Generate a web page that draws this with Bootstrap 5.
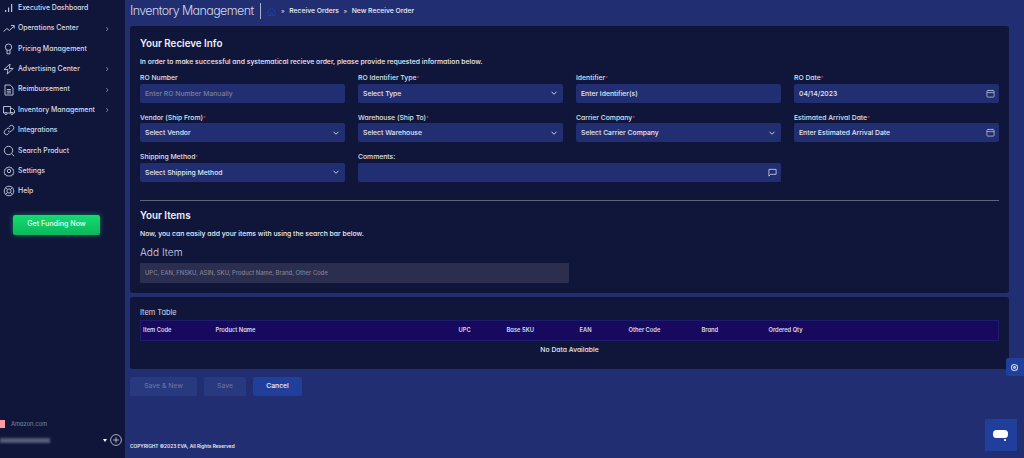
<!DOCTYPE html>
<html lang="en">
<head>
    <meta charset="UTF-8">
    <meta name="viewport" content="width=device-width, initial-scale=1.0">
    <title>Inventory Management</title>
    <link href="https://cdn.jsdelivr.net/npm/bootstrap@5.3.0/dist/css/bootstrap.min.css" rel="stylesheet">
    <style>
        html, body { height: 100%; }
        body {
            overflow: hidden;
            background: #212e71;
            color: #e6e8f2;
            font-family: Inter, "Liberation Sans", sans-serif;
            font-feature-settings: "cv11";
            font-size: 7px;
            font-weight: 500;
            line-height: 1.2;
        }
        .app-shell { height: 458px; }

        /* sidebar */
        .side-bar { width: 125px; flex: none; background: #10163a; position: relative; }
        .side-list { margin-top: -2px; }
        .side-item { position: relative; height: 20.37px; padding-left: 3px; color: #d9dcec; font-size: 6.9px; }
        .side-item svg.ico { width: 12px; height: 12px; margin-right: 3px; flex: none; }
        .side-item .side-arrow { position: absolute; left: 104px; width: 6px; height: 6px; }
        .funding-btn {
            width: 87px; height: 20px; margin: 13px 0 0 13px; padding: 0;
            background: linear-gradient(#12dc70, #0cb75c); border: 0; border-radius: 2px;
            color: #e9fff3; font-size: 7.1px; font-weight: 500;
            box-shadow: 0 0 5px rgba(18, 220, 112, .5);
        }
        .account-row { position: absolute; left: 0; right: 0; bottom: 0; height: 38px; }
        .shop-flag { position: absolute; left: 0; top: 0; width: 5px; height: 8px; background: #ff9a9f; }
        .shop-name { position: absolute; left: 11px; top: 1px; color: #74788f; font-size: 5.7px; }
        .shop-blur { position: absolute; left: 0; top: 18px; width: 50px; height: 5px; background: #565b78; filter: blur(1.2px); }
        .shop-caret { position: absolute; left: 103px; top: 19px; border: 2.5px solid transparent; border-top: 3px solid #fff; border-bottom: 0; }
        .shop-plus { position: absolute; left: 110px; top: 14px; width: 12px; height: 12px; }

        /* header */
        .main-area { min-width: 0; padding: 0 15px 0 5px; }
        .top-bar { height: 26px; padding-bottom: 4px; }
        .page-title { font-size: 12.5px; font-weight: 300; letter-spacing: -.6px; color: #d5d9ea; padding-right: 6px; border-right: 1px solid #aab0cc; line-height: 16px; margin: 0 6px 0 0; }
        .crumb-home { width: 9px; height: 9px; margin-right: 1px; }
        .crumb-sep { color: #c5c9dd; font-size: 6px; margin: 0 4.5px; }
        .crumb-text { font-size: 6.8px; color: #eceef6; }

        /* panels */
        .panel-dark { background: #10163a; border-radius: 3px; padding: 0 10px; }
        .info-panel { height: 267px; }
        .table-panel { height: 72px; margin-top: 4px; }
        .panel-title { font-size: 9.8px; font-weight: 600; color: #eef0f8; margin: 0; padding-top: 12px; line-height: 12px; }
        .items-title { padding-top: 9px; }
        .panel-text { font-size: 6.84px; color: #eceef6; margin: 8px 0 0; line-height: 8px; }
        .field-grid { --bs-gutter-x: 13px; --bs-gutter-y: 0; margin-top: 2px; }
        .field-box { height: 39.6px; padding-top: 6px; position: relative; }
        .field-label { display: block; font-size: 6.8px; color: #dfe2ef; line-height: 8px; margin: 0 0 1.5px; }
        .field-label i { color: #e0334a; font-style: normal; font-size: 5px; vertical-align: top; }
        .field-input.form-control, .field-input.form-select {
            height: 19px; min-height: 0; padding: 0 5px; border: 0; border-radius: 2px;
            background-color: #212e71; color: #e6e8f2; font-size: 6.8px; font-weight: 500; line-height: 19px;
            box-shadow: none;
        }
        .field-input.form-select {
            background-size: 8px 8px; background-position: right 5px center; padding-right: 16px;
            background-image: url("data:image/svg+xml,%3csvg xmlns='http://www.w3.org/2000/svg' viewBox='0 0 16 16'%3e%3cpath fill='none' stroke='%23ccd0e4' stroke-width='2' d='M3 5.5l5 5 5-5'/%3e%3c/svg%3e");
        }
        .field-input::placeholder { color: #e6e8f2; opacity: 1; }
        .field-input.is-muted::placeholder { color: #75809f; }
        .field-ico { position: absolute; right: 10.5px; bottom: 10px; width: 9px; height: 9px; }
        .field-rule { margin: 13px 0 0; border-color: #60647e; opacity: 1; }
        .add-title { font-size: 10.2px; font-weight: 300; color: #d5d9ea; margin: 8px 0 0; line-height: 12px; }
        .search-box.form-control {
            width: 429px; height: 20px; margin-top: 5px; padding: 0 5px; border: 0; border-radius: 1px;
            background: #2b2e4e; font-size: 5.9px; font-weight: 500; box-shadow: none;
        }
        .search-box::placeholder { color: #7f8298; opacity: 1; }
        .table-title { font-size: 7.4px; font-weight: 400; color: #d5d9ea; padding-top: 10.5px; line-height: 9px; margin: 0 0 3px; }
        .item-table { --bs-table-bg: transparent; --bs-table-color: #d9dcec; margin: 0; table-layout: fixed; width: 859px; }
        .item-table th { height: 20px; padding: 0 2px; background: #170a5e; color: #d9dcec; font-size: 5.75px; font-weight: 600; border: 0; vertical-align: middle; }
        .item-table tr { border: 1px solid #1c1d6c; }
        .item-table td { height: 20px; padding: 0; border: 0; font-size: 6.8px; color: #e6e8f2; text-align: center; vertical-align: middle; }
        .item-table tbody tr { border: 0; }

        /* buttons and footer */
        .action-row { margin-top: 8px; gap: 7px; }
        .act-btn { height: 19px; padding: 0; border: 0; border-radius: 2px; font-size: 6.8px; font-weight: 500; }
        .act-save-new { width: 67px; }
        .act-save { width: 42px; }
        .act-cancel { width: 49px; }
        .act-off { background: #28397f; color: #65719f; }
        .act-on { background: #1f3f9b; color: #eef0f8; }
        .copy-line { margin-top: auto; padding-bottom: 9px; font-size: 4.8px; font-weight: 600; color: #e6e8f2; line-height: 6px; }

        /* floating */
        .gear-tab { position: absolute; left: 1006px; top: 358px; width: 18px; height: 18px; padding-right: 1px; background: #1f3f9b; border-radius: 2px 0 0 2px; }
        .chat-tab { position: absolute; left: 985px; top: 419px; width: 32px; height: 32px; background: #1f3f9b; }
        .chat-bubble { position: absolute; left: 8px; top: 11px; width: 15px; height: 8px; background: #fff; border-radius: 3.5px; }
        .chat-tail { position: absolute; left: 19px; top: 20px; width: 2px; height: 2px; background: #dfe4f5; }
    </style>
</head>
<body>
    <svg width="0" height="0" class="position-absolute">
        <defs>
            <symbol id="i-chevron" viewBox="0 0 8 8"><path d="M3 1.5l2.5 2.5L3 6.5" fill="none" stroke="#9ca1bb" stroke-width="1"/></symbol>
            <symbol id="i-cal" viewBox="0 0 10 10"><rect x="1" y="1.7" width="8" height="7.3" rx="1" fill="none" stroke="#c8cce0" stroke-width=".8"/><path d="M1 4h8M3.2.8v1.6M6.8.8v1.6" stroke="#c8cce0" stroke-width=".8"/></symbol>
        </defs>
    </svg>
    <div class="app-shell d-flex">
        <!-- Sidebar -->
        <aside class="side-bar">
            <div class="side-list d-flex flex-column">
                <div class="side-item d-flex align-items-center">
                    <svg class="ico" viewBox="0 0 12 12" fill="#b9bdd2"><rect x="2" y="8" width="1.2" height="2"/><rect x="5" y="5.5" width="1.2" height="4.5"/><rect x="8" y="2" width="1.2" height="8"/></svg>
                    Executive Dashboard
                </div>
                <div class="side-item d-flex align-items-center">
                    <svg class="ico" viewBox="0 0 12 12" fill="none" stroke="#c8cce0" stroke-width=".9"><path d="M.5 8.5l3.5-3 2.5 2 4.5-4.5M8 2.5h3.2v3"/></svg>
                    Operations Center<svg class="side-arrow"><use href="#i-chevron"/></svg>
                </div>
                <div class="side-item d-flex align-items-center">
                    <svg class="ico" viewBox="0 0 12 12" fill="none" stroke="#c8cce0" stroke-width=".9"><circle cx="5.5" cy="4.2" r="3.2"/><path d="M4 7.2v3.6h3V7.2"/></svg>
                    Pricing Management
                </div>
                <div class="side-item d-flex align-items-center">
                    <svg class="ico" viewBox="0 0 12 12" fill="none" stroke="#c8cce0" stroke-width=".9"><path d="M7 1L1 6.5h4L4.2 11l6-5.5H6.4z"/></svg>
                    Advertising Center<svg class="side-arrow"><use href="#i-chevron"/></svg>
                </div>
                <div class="side-item d-flex align-items-center">
                    <svg class="ico" viewBox="0 0 12 12" fill="none" stroke="#c8cce0" stroke-width=".9"><path d="M2 1h5.2L10 3.8V11H2z"/><path d="M3.8 5.5h4.2M3.8 7.2h4.2M3.8 8.9h4.2"/></svg>
                    Reimbursement<svg class="side-arrow"><use href="#i-chevron"/></svg>
                </div>
                <div class="side-item d-flex align-items-center">
                    <svg class="ico" viewBox="0 0 12 12" fill="none" stroke="#c8cce0" stroke-width=".9"><path d="M.5 2.5h7v6.5h-7zM7.5 4.5h2.2l1.8 2v2.5h-4"/><circle cx="3" cy="9.5" r="1.1" fill="#10163a"/><circle cx="9" cy="9.5" r="1.1" fill="#10163a"/></svg>
                    Inventory Management<svg class="side-arrow"><use href="#i-chevron"/></svg>
                </div>
                <div class="side-item d-flex align-items-center">
                    <svg class="ico" viewBox="0 0 12 12" fill="none" stroke="#c8cce0" stroke-width=".9"><path d="M5 7a2.3 2.3 0 0 0 3.4.1l2-2A2.4 2.4 0 0 0 7 1.8l-1 1"/><path d="M7 5a2.3 2.3 0 0 0-3.4-.1l-2 2A2.4 2.4 0 0 0 5 10.2l1-1"/></svg>
                    Integrations
                </div>
                <div class="side-item d-flex align-items-center">
                    <svg class="ico" viewBox="0 0 12 12" fill="none" stroke="#c8cce0" stroke-width=".9"><circle cx="5.5" cy="5.5" r="4.2"/><path d="M8.6 8.6l2.6 2.6"/></svg>
                    Search Product
                </div>
                <div class="side-item d-flex align-items-center">
                    <svg class="ico" viewBox="0 0 12 12" fill="none" stroke="#c8cce0" stroke-width=".9"><circle cx="6" cy="6" r="1.7"/><path d="M6 1l1 1.4 1.7-.3.6 1.6 1.6.6-.3 1.7L11.7 7l-1.1 1.3.3 1.5-1.6.4-.7 1.4L7 11.2 6 12l-1-.8-1.6.4-.7-1.4-1.6-.4.3-1.5L.3 7l1.1-1-.3-1.7 1.6-.6.6-1.6L5 2.4z" transform="translate(.6 .6) scale(.9)"/></svg>
                    Settings
                </div>
                <div class="side-item d-flex align-items-center">
                    <svg class="ico" viewBox="0 0 12 12" fill="none" stroke="#c8cce0" stroke-width=".9"><circle cx="6" cy="6" r="4.8"/><circle cx="6" cy="6" r="2.1"/><path d="M2.7 2.7l1.8 1.8M9.3 2.7L7.5 4.5M2.7 9.3l1.8-1.8M9.3 9.3L7.5 7.5"/></svg>
                    Help
                </div>
            </div>
            <button class="funding-btn btn" type="button">Get Funding Now</button>
            <div class="account-row">
                <span class="shop-flag"></span>
                <span class="shop-name">Amazon.com</span>
                <span class="shop-blur"></span>
                <span class="shop-caret"></span>
                <svg class="shop-plus" viewBox="0 0 12 12" fill="none" stroke="#d0d3e4" stroke-width=".8"><circle cx="6" cy="6" r="5.4"/><path d="M6 3.2v5.6M3.2 6h5.6"/></svg>
            </div>
        </aside>

        <!-- Main -->
        <main class="main-area flex-grow-1 d-flex flex-column">
            <div class="top-bar d-flex align-items-center">
                <h1 class="page-title">Inventory Management</h1>
                <svg class="crumb-home" viewBox="0 0 10 10" fill="none" stroke="#2342a6" stroke-width=".9"><path d="M1 4.5L5 1l4 3.5V9.5H1zM4 9.5V6.5h2v3"/></svg>
                <span class="crumb-sep">»</span>
                <span class="crumb-text">Receive Orders</span>
                <span class="crumb-sep">»</span>
                <span class="crumb-text">New Receive Order</span>
            </div>

            <section class="panel-dark info-panel">
                <h2 class="panel-title">Your Recieve Info</h2>
                <p class="panel-text">In order to make successful and systematical recieve order, please provide requested information below.</p>
                <form>
                    <div class="row row-cols-4 field-grid">
                        <div class="col field-box">
                            <label class="field-label">RO Number</label>
                            <input class="form-control field-input is-muted" placeholder="Enter RO Number Manually">
                        </div>
                        <div class="col field-box">
                            <label class="field-label">RO Identifier Type<i>*</i></label>
                            <select class="form-select field-input"><option>Select Type</option></select>
                        </div>
                        <div class="col field-box">
                            <label class="field-label">Identifier<i>*</i></label>
                            <input class="form-control field-input" placeholder="Enter Identifier(s)">
                        </div>
                        <div class="col field-box">
                            <label class="field-label">RO Date<i>*</i></label>
                            <input class="form-control field-input" value="04/14/2023">
                            <svg class="field-ico"><use href="#i-cal"/></svg>
                        </div>
                        <div class="col field-box">
                            <label class="field-label">Vendor (Ship From)<i>*</i></label>
                            <select class="form-select field-input"><option>Select Vendor</option></select>
                        </div>
                        <div class="col field-box">
                            <label class="field-label">Warehouse (Ship To)<i>*</i></label>
                            <select class="form-select field-input"><option>Select Warehouse</option></select>
                        </div>
                        <div class="col field-box">
                            <label class="field-label">Carrier Company<i>*</i></label>
                            <select class="form-select field-input"><option>Select Carrier Company</option></select>
                        </div>
                        <div class="col field-box">
                            <label class="field-label">Estimated Arrival Date<i>*</i></label>
                            <input class="form-control field-input" placeholder="Enter Estimated Arrival Date">
                            <svg class="field-ico"><use href="#i-cal"/></svg>
                        </div>
                        <div class="col field-box">
                            <label class="field-label">Shipping Method<i>*</i></label>
                            <select class="form-select field-input"><option>Select Shipping Method</option></select>
                        </div>
                        <div class="col-6 field-box">
                            <label class="field-label">Comments:</label>
                            <input class="form-control field-input">
                            <svg class="field-ico" viewBox="0 0 10 10" fill="none" stroke="#d5d9ea" stroke-width=".9"><path d="M1 1.5h8v5.5H3L1 9z"/></svg>
                        </div>
                    </div>
                    <hr class="field-rule">
                    <h2 class="panel-title items-title">Your Items</h2>
                    <p class="panel-text">Now, you can easily add your items with using the search bar below.</p>
                    <h3 class="add-title">Add Item</h3>
                    <input class="form-control search-box" placeholder="UPC, EAN, FNSKU, ASIN, SKU, Product Name, Brand, Other Code">
                </form>
            </section>

            <section class="panel-dark table-panel">
                <div class="table-title">Item Table</div>
                <table class="table item-table">
                    <colgroup>
                        <col style="width:73px"><col style="width:243px"><col style="width:48px"><col style="width:73px">
                        <col style="width:49px"><col style="width:73px"><col style="width:67px"><col>
                    </colgroup>
                    <thead>
                        <tr><th>Item Code</th><th>Product Name</th><th>UPC</th><th>Base SKU</th><th>EAN</th><th>Other Code</th><th>Brand</th><th>Ordered Qty</th></tr>
                    </thead>
                    <tbody>
                        <tr><td colspan="8">No Data Available</td></tr>
                    </tbody>
                </table>
            </section>

            <div class="action-row d-flex">
                <button class="btn act-btn act-off act-save-new" type="button">Save &amp; New</button>
                <button class="btn act-btn act-off act-save" type="button">Save</button>
                <button class="btn act-btn act-on act-cancel" type="button">Cancel</button>
            </div>
            <div class="copy-line">COPYRIGHT ©2023 EVA, All Rights Reserved</div>
        </main>
    </div>

    <div class="gear-tab d-flex align-items-center justify-content-center">
        <svg width="9" height="9" viewBox="0 0 10 10" fill="none" stroke="#cfd6f0" stroke-width="1.2"><circle cx="5" cy="5" r="3.4"/><circle cx="5" cy="5" r="1"/></svg>
    </div>
    <div class="chat-tab"><span class="chat-bubble"></span><span class="chat-tail"></span></div>

    <script src="https://cdn.jsdelivr.net/npm/bootstrap@5.3.0/dist/js/bootstrap.bundle.min.js"></script>
</body>
</html>
